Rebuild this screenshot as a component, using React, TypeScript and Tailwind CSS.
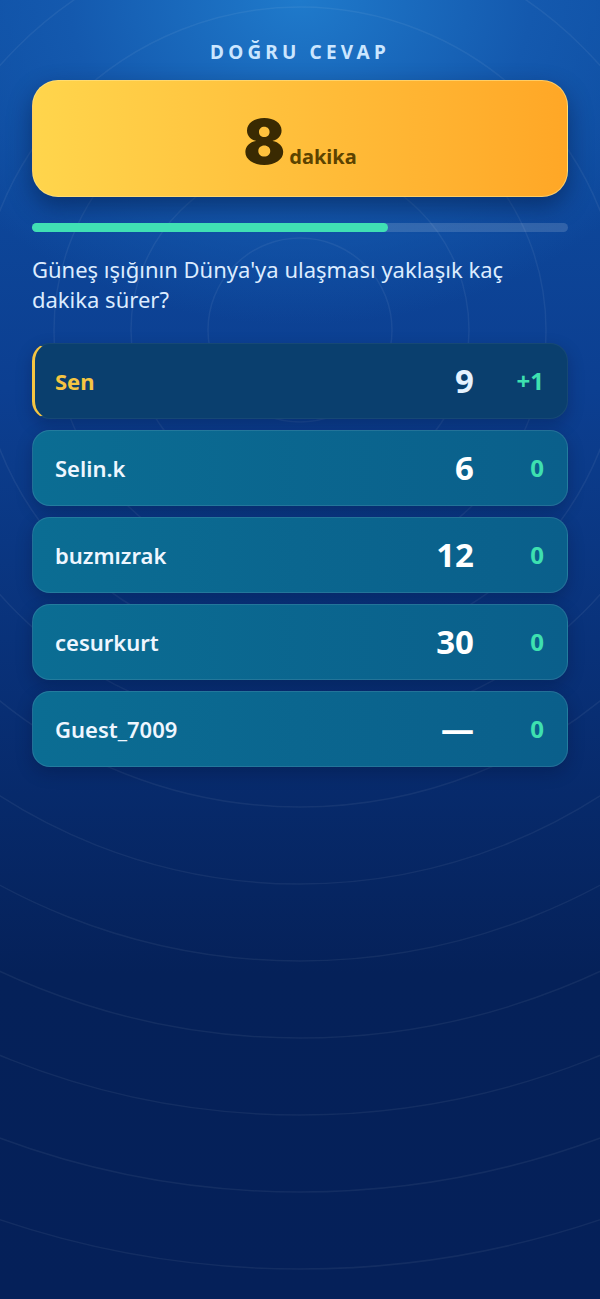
import React from 'react';

type Row = { name: string; score: string; delta: string; me?: boolean };

const rows: Row[] = [
    { name: 'Sen', score: '9', delta: '+1', me: true },
    { name: 'Selin.k', score: '6', delta: '0' },
    { name: 'buzmızrak', score: '12', delta: '0' },
    { name: 'cesurkurt', score: '30', delta: '0' },
    { name: 'Guest_7009', score: '—', delta: '0' },
];

const rings = [92, 169, 246, 323, 400, 477, 554, 631, 708, 785, 862, 939, 1016];

function Rings() {
    return (
        <svg className="pointer-events-none absolute inset-0 h-full w-full" viewBox="0 0 600 1299" preserveAspectRatio="none">
            {rings.map((r) => (
                <circle key={r} cx="300" cy="330" r={r} fill="none" stroke="#ffffff" strokeOpacity="0.06" strokeWidth="1.5" />
            ))}
        </svg>
    );
}

function ScoreRow({ row }: { row: Row }) {
    return (
        <div
            className={
                row.me
                    ? 'flex h-[76px] items-center rounded-[18px] border border-white/5 border-l-[3px] border-l-[#f5c542] bg-[#0a3f6e] pl-[20px] pr-[23px] shadow-[0_6px_16px_rgba(0,10,40,0.25)]'
                    : 'flex h-[76px] items-center rounded-[18px] border border-white/10 bg-gradient-to-r from-[#0b6d93] to-[#0a5f8b] pl-[22px] pr-[23px] shadow-[0_6px_16px_rgba(0,10,40,0.25)]'
            }
        >
            <span className={row.me ? 'flex-1 text-[22px] font-bold text-[#f5c542]' : 'flex-1 text-[22px] font-semibold text-[#eef6ff]'}>
                {row.name}
            </span>
            <span className={row.me ? 'text-[33px] font-bold text-[#e6f2ff]' : 'text-[33px] font-bold text-white'}>{row.score}</span>
            <span className="ml-[26px] w-[44px] text-right text-[24px] font-bold text-[#3ee0b0]">{row.delta}</span>
        </div>
    );
}

export default function App() {
    return (
        <div
            className="relative min-h-screen overflow-hidden bg-[radial-gradient(ellipse_70%_25%_at_50%_0%,#1f7acb_0%,#1459ae_55%,transparent_100%),linear-gradient(180deg,#0e4ea3_0%,#0c3f91_30%,#082e73_55%,#052159_75%,#052059_100%)] font-['Noto_Sans',sans-serif]"
        >
            <Rings />
            <div className="relative flex flex-col px-[32px] pt-[38px]">
                <div className="text-center text-[19px] leading-[28px] font-bold tracking-[0.22em] text-[#cbe6ff]">DOĞRU CEVAP</div>

                <div className="mt-[14px] flex h-[117px] items-center justify-center rounded-[26px] border border-[#ffe38a]/60 bg-gradient-to-r from-[#ffd54c] to-[#ffa726] shadow-[0_10px_24px_rgba(0,15,50,0.45)]">
                    <div className="flex items-baseline gap-[4px] pt-[6px]">
                        <span className="font-['Inter',sans-serif] text-[62px] font-black leading-none text-[#3a2a02]">8</span>
                        <span className="text-[20px] font-bold leading-none text-[#5c4300]">dakika</span>
                    </div>
                </div>

                <div className="mt-[26px] h-[9px] w-full rounded-full bg-white/15">
                    <div className="h-full w-[66.4%] rounded-full bg-[#40e0b4]" />
                </div>

                <p className="mt-[22px] max-w-[490px] text-[22px] leading-[30px] text-[#dcecff]">
                    Güneş ışığının Dünya'ya ulaşması yaklaşık kaç dakika sürer?
                </p>

                <div className="mt-[29px] flex flex-col gap-[11px]">
                    {rows.map((r) => (
                        <ScoreRow key={r.name} row={r} />
                    ))}
                </div>
            </div>
        </div>
    );
}
